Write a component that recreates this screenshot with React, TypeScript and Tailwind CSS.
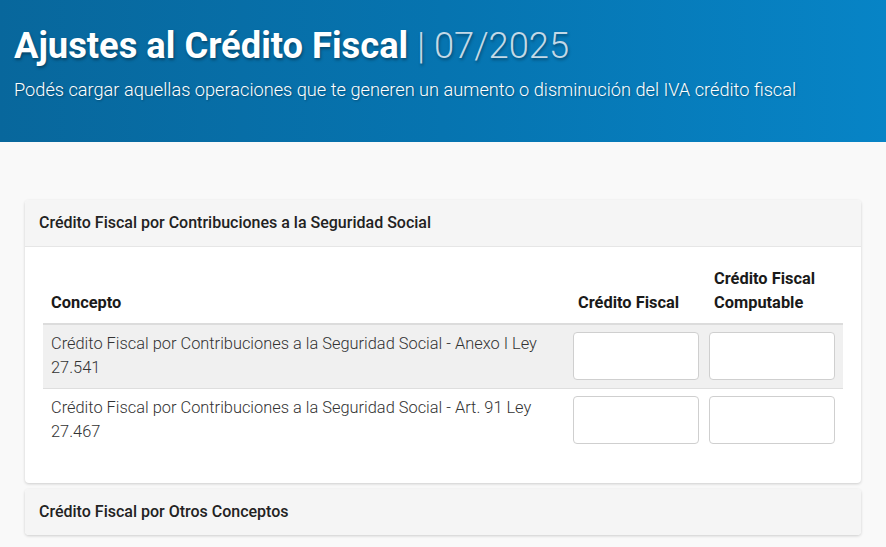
import React from "react";

const rows = [
  "Crédito Fiscal por Contribuciones a la Seguridad Social - Anexo I Ley 27.541",
  "Crédito Fiscal por Contribuciones a la Seguridad Social - Art. 91 Ley 27.467",
];

function Input() {
  return (
    <input
      type="text"
      className="h-[48px] w-[126px] rounded-[4px] border border-[#cfcfcf] bg-white px-2 text-[16px] outline-none focus:border-[#0784c6]"
    />
  );
}

export default function App() {
  return (
    <div className="min-h-[547px] bg-[#f9f9f9] font-['Roboto',sans-serif]">
      {/* Header */}
      <header className="h-[142px] bg-gradient-to-r from-[#08679c] via-[#0674b0] to-[#0784c6] px-[14px] pt-[25px]">
        <h1 className="text-[36.3px] leading-[42px] text-white [text-shadow:1px_2px_3px_rgba(0,0,0,0.35)]">
          <span className="font-bold">Ajustes al Crédito Fiscal</span>
          <span className="font-light text-[#c3d9e7]"> | 07/2025</span>
        </h1>
        <p className="mt-[10px] text-[18.2px] font-light leading-[26px] text-white [text-shadow:1px_1px_2px_rgba(0,0,0,0.3)]">
          Podés cargar aquellas operaciones que te generen un aumento o disminución del IVA crédito fiscal
        </p>
      </header>

      <main className="px-[25px] pt-[58px]">
        {/* Card 1 */}
        <section className="w-[836px] overflow-hidden rounded-[4px] bg-white shadow-[0_1px_3px_rgba(0,0,0,0.18)]">
          <div className="flex h-[47px] items-center border-b border-[#e6e6e6] bg-[#f5f5f5] px-[14px] text-[16px] font-medium text-[#222]">
            Crédito Fiscal por Contribuciones a la Seguridad Social
          </div>
          <div className="px-[18px] pb-[31px] pt-[20px]">
            <div className="grid grid-cols-[1fr_136px_138px] items-end border-b-2 border-[#dcdcdc] pb-[8px] text-[16.4px] font-bold leading-[24px] text-[#1a1a1a]">
              <div className="pl-[8px]">Concepto</div>
              <div className="pl-[9px]">Crédito Fiscal</div>
              <div className="pl-[9px]">
                Crédito Fiscal
                <br />
                Computable
              </div>
            </div>
            {rows.map((r, i) => (
              <div
                key={r}
                className={`grid grid-cols-[1fr_136px_138px] pb-[8px] pt-[7px] ${i % 2 === 0 ? "bg-[#f0f0f0]" : "border-t border-[#dedede] bg-white"}`}
              >
                <div className="pl-[8px] pr-[16px] text-[16.4px] font-light leading-[24px] text-[#333]">
                  {r}
                </div>
                <div className="pl-[4px]">
                  <Input />
                </div>
                <div className="pl-[4px]">
                  <Input />
                </div>
              </div>
            ))}
          </div>
        </section>

        {/* Card 2 */}
        <section className="mt-[6px] w-[836px] overflow-hidden rounded-[4px] bg-white shadow-[0_1px_3px_rgba(0,0,0,0.18)]">
          <div className="flex h-[46px] items-center bg-[#f5f5f5] px-[14px] text-[16px] font-medium text-[#222]">
            Crédito Fiscal por Otros Conceptos
          </div>
        </section>
      </main>
    </div>
  );
}
